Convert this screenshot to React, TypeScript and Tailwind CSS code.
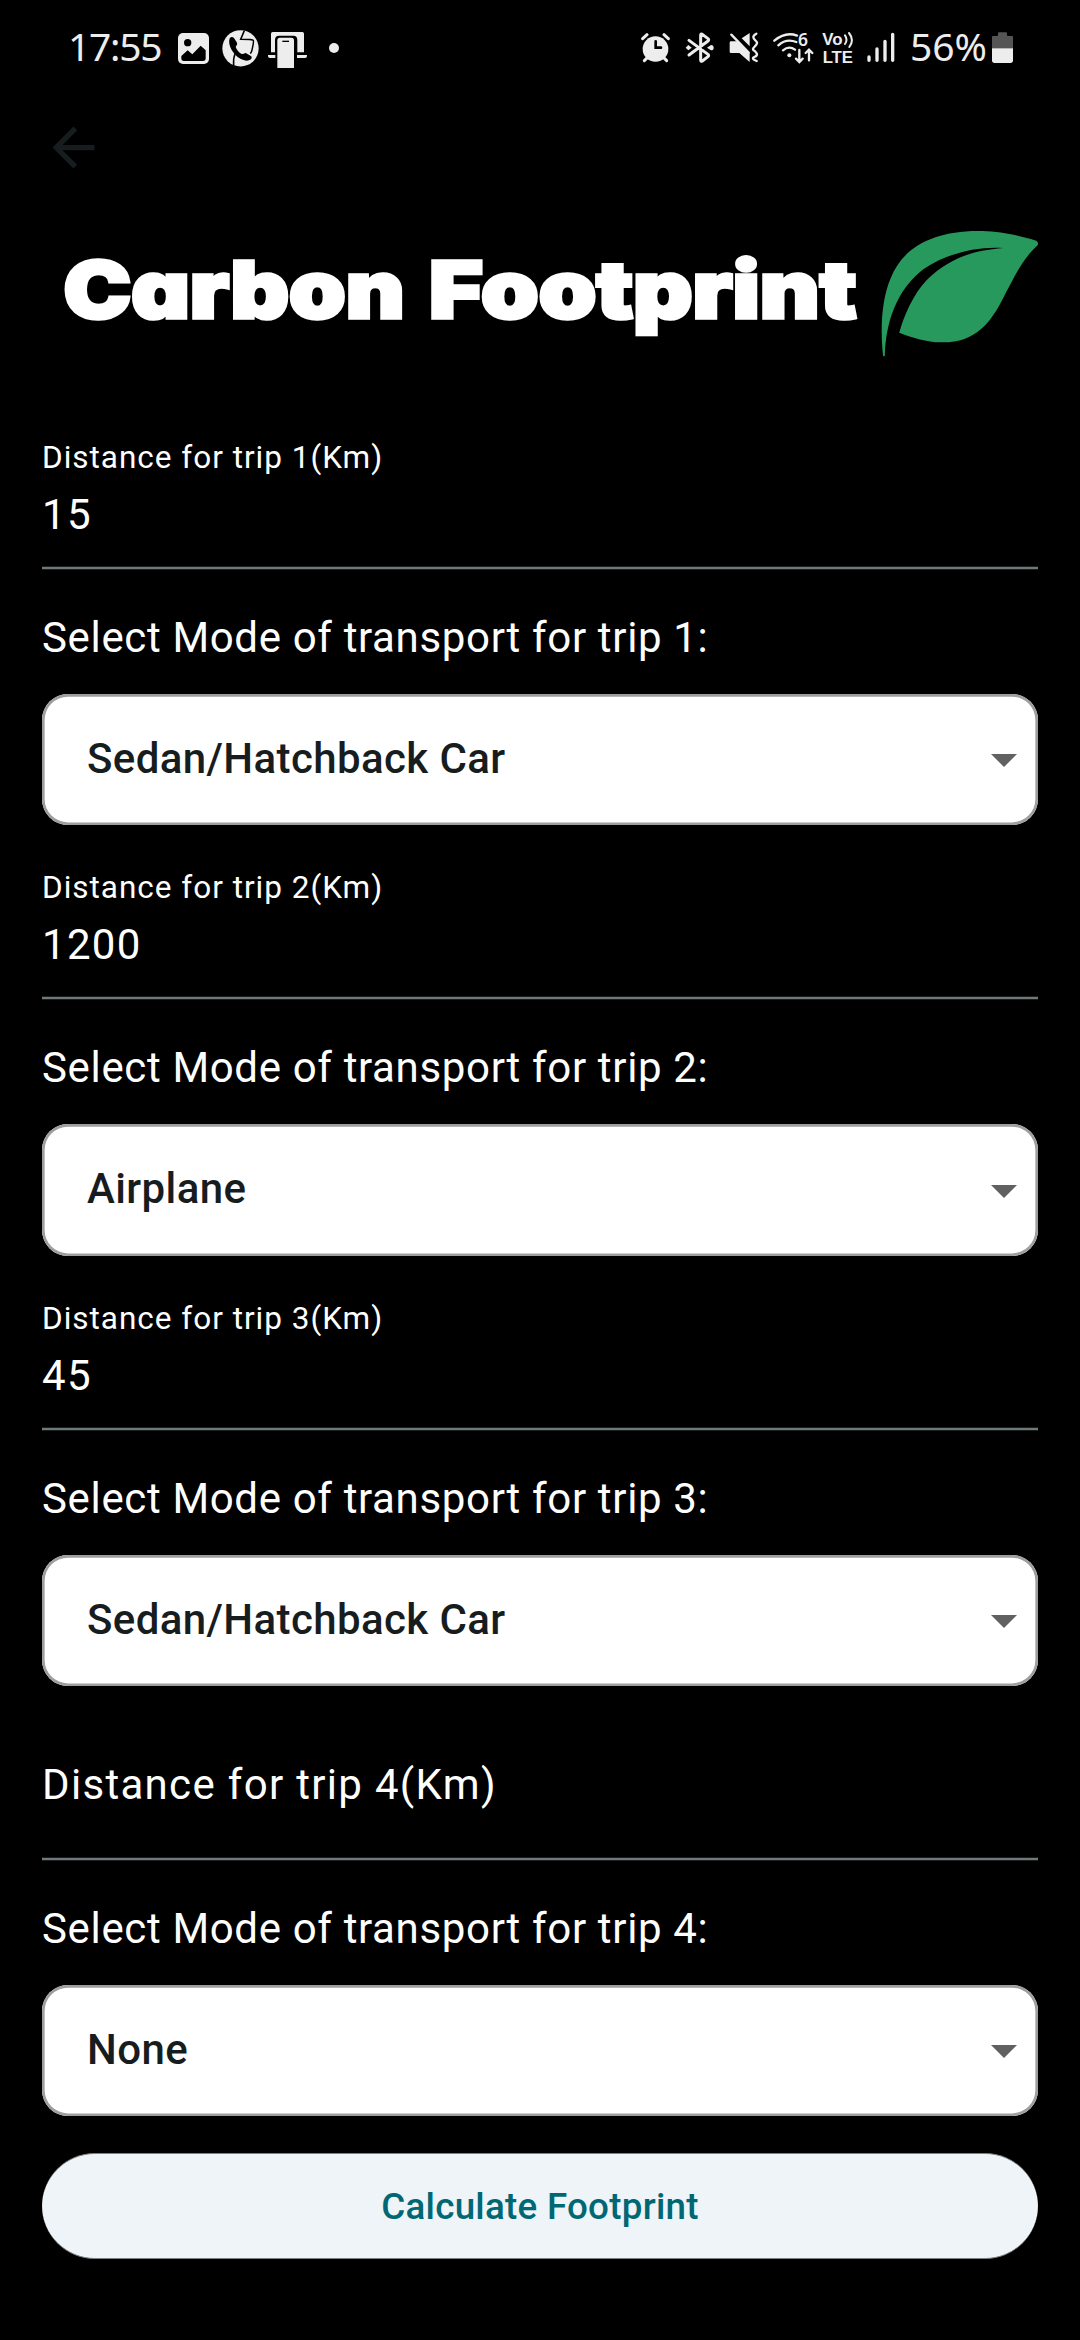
import React from "react";

const INK = "#ededed";

type IconProps = { x: number; w: number; className: string; children: React.ReactNode };

function StatusIcon({ x, w, className, children }: IconProps) {
  return (
    <svg viewBox={`${x} 57 ${w} 120`} className={`h-10 shrink-0 ${className}`} fill={INK}>
      {children}
    </svg>
  );
}

function StatusBar() {
  return (
    <header className="flex h-[98px] items-center pl-[68px] font-['Noto_Sans',sans-serif] text-[39px] leading-10 text-[#ededed]">
      <span className="-mt-[6px] w-[110px] shrink-0 tracking-[-1.3px] whitespace-nowrap">17:55</span>

      <StatusIcon x={414} w={93} className="w-[31px]">
        <rect x="414" y="69" width="93" height="93" rx="15" />
        <circle cx="443" cy="98" r="11" fill="#000" />
        <path d="M424 138l19-17 14 12 25-26 15 14v24q0 8-8 8h-57q-8 0-8-8z" fill="#000" />
      </StatusIcon>
      <StatusIcon x={546} w={111} className="ml-[13px] w-[37px]">
        <circle cx="601.500" cy="115" r="54.500" />
        <path
          d="M613 62l-11 26q36 0 38 3 2 4-5 33l-4 7M585 132q-6 14-4 34"
          fill="none"
          stroke="#000"
          strokeWidth="4.500"
        />
        <path d="M569 85q6-8 13-1l9 14q2 5-2 9l-2 4q5 14 18 21l7-1q5-4 9 0l13 8q3 5-1 9-9 6-20 3-24-7-38-31-11-20-6-35z" fill="#000" />
      </StatusIcon>
      <StatusIcon x={684} w={117} className="ml-[9px] w-[39px]">
        <path d="M698 66h89q5 0 5 5v56h-20V90q0-13-12-13h-43q-12 0-12 13v37h-12V71q0-5 5-5zM684 135h22v9h-16q-6 0-6-6zM771 135h30v3q0 6-6 6h-24z" />
        <path d="M712 174V91q0-8 8-8h34q8 0 8 8v83z" />
        <rect x="727" y="92" width="20" height="4" fill="#000" />
      </StatusIcon>
      <StatusIcon x={867} w={30} className="ml-[22px] w-[10px]">
        <circle cx="882" cy="114" r="15" />
      </StatusIcon>

      <StatusIcon x={63} w={87} className="ml-[302px] w-[29px]">
        <circle cx="106.500" cy="117" r="38.500" />
        <path d="M68 86l13-12M145 86l-13-12" stroke={INK} strokeWidth="9" strokeLinecap="round" />
        <path d="M73 152l9-9M140 152l-9-9" stroke={INK} strokeWidth="9" strokeLinecap="round" />
        <path d="M107 94v19h16" fill="none" stroke="#000" strokeWidth="8" strokeLinecap="round" />
      </StatusIcon>
      <StatusIcon x={195} w={87} className="ml-[15px] w-[29px]">
        <path
          d="M207 91l57 42q4 4 0 7l-17 13q-5 3-5-3V76q0-6 5-3l17 13q4 3 0 7l-57 42"
          fill="none"
          stroke={INK}
          strokeWidth="9"
          strokeLinecap="round"
          strokeLinejoin="round"
        />
        <path d="M197 113l8-8 10 8-10 8zM261 113l12-8q8 0 8 8t-8 8z" />
      </StatusIcon>
      <StatusIcon x={327} w={90} className="ml-[15px] w-[30px]">
        <path d="M389 69v40l-24-24zM329 98q0-4 4-4h20l36 34v28l-31-27h-25q-4 0-4-4z" />
        <path d="M334 74l52 54" stroke={INK} strokeWidth="7" strokeLinecap="round" />
        <path
          d="M409 71q-9 5-9 10t6 10 5 9-8 11-2 10 9 9-7 11 7 12"
          fill="none"
          stroke={INK}
          strokeWidth="7"
          strokeLinecap="round"
        />
      </StatusIcon>
      <StatusIcon x={459} w={123} className="ml-[14px] w-[41px]">
        <path
          d="M463 92q34-28 68-15M475 106q24-22 54-10M489 121q18-15 36-2"
          fill="none"
          stroke={INK}
          strokeWidth="7"
          strokeLinecap="round"
        />
        <circle cx="508" cy="136" r="6" />
        <path
          d="M538 120v34M528 146l10 10 10-10M567 151v-31M557 129l10-10 10 10"
          fill="none"
          stroke={INK}
          strokeWidth="7"
          strokeLinecap="round"
        />
        <text x="534" y="109" fontSize="51" fontWeight="600" textLength="30" lengthAdjust="spacingAndGlyphs">6</text>
      </StatusIcon>
      <StatusIcon x={606} w={96} className="ml-[8px] w-[32px]">
        <g fontFamily="'Liberation Sans', sans-serif" fontWeight="700">
          <text x="607" y="104" fontSize="49" textLength="61" lengthAdjust="spacingAndGlyphs">Vo</text>
          <text x="608" y="158" fontSize="51" textLength="91" lengthAdjust="spacingAndGlyphs">LTE</text>
        </g>
        <path
          d="M675 76q9 13 0 26M687 69q17 21 1 42"
          fill="none"
          stroke={INK}
          strokeWidth="6"
          strokeLinecap="round"
        />
      </StatusIcon>
      <StatusIcon x={741} w={84} className="ml-[13px] w-[28px]">
        <path d="M747 141v10M771 117v34M795 94v57M818 73v78" stroke={INK} strokeWidth="10" strokeLinecap="round" />
      </StatusIcon>
      <span className="-mt-[6px] ml-[15px] w-[82px] shrink-0 tracking-[-0.1px] whitespace-nowrap">56%</span>
      <StatusIcon x={1116} w={63} className="w-[21px]">
        <path d="M1116 80q0-2 2-2h13q3 0 3-3v-5q0-3 3-3h21q3 0 3 3v5q0 3 3 3h13q2 0 2 2v35h-63z" fill="#555" />
        <path d="M1116 115h63v36q0 8-8 8h-47q-8 0-8-8z" />
      </StatusIcon>
    </header>
  );
}

function Logo() {
  return (
    <div className="flex h-[131px] items-start pl-[60px]">
      <h1 className="w-[800px] shrink-0">
        <svg viewBox="60 231 800 131" className="h-[131px] w-[800px]" aria-label="Carbon Footprint">
          <g
            fontFamily="Inter, sans-serif"
            fontSize="79"
            fontWeight="900"
            fill="#fff"
            stroke="#fff"
            strokeWidth="3.500"
            style={{ fontFeatureSettings: '"cv11"' }}
          >
            <text x="63.500" y="318" textLength="341" lengthAdjust="spacingAndGlyphs">Carbon</text>
            <text x="429" y="318" textLength="427.500" lengthAdjust="spacingAndGlyphs">Footprint</text>
          </g>
        </svg>
      </h1>
      <svg
        viewBox="1047 60 459 381"
        preserveAspectRatio="none"
        className="-mt-px ml-[20.500px] h-[127px] w-[158px]"
        fill="#28995d"
      >
        <path d="M1053 437C1044 350 1050 265 1075 205C1110 112 1200 60 1340 63C1400 65 1440 75 1498 92Q1506 97 1502 106C1455 152 1444 183 1404 260C1365 340 1320 400 1220 397C1180 396 1140 384 1100 368C1113 318 1142 250 1180 210C1245 145 1310 122 1402 114C1330 108 1235 130 1170 178C1108 227 1062 310 1058 437Q1055 441 1053 437Z" />
      </svg>
    </div>
  );
}

type Trip = { id: number; distance?: string; mode: string };

const trips: Trip[] = [
  { id: 1, distance: "15", mode: "Sedan/Hatchback Car" },
  { id: 2, distance: "1200", mode: "Airplane" },
  { id: 3, distance: "45", mode: "Sedan/Hatchback Car" },
  { id: 4, mode: "None" },
];

function TripSection({ trip }: { trip: Trip }) {
  return (
    <section className="flex h-[430.4px] flex-col text-[42px] leading-[63px] tracking-[1.3125px]">
      <div className="flex h-[144px] flex-col">
        {trip.distance ? (
          <>
            <span className="mt-[14.8px] text-[31.5px] leading-[42px] tracking-[0.984px]">
              Distance for trip {trip.id}(Km)
            </span>
            <span className="mt-1">{trip.distance}</span>
          </>
        ) : (
          <span className="mt-[39.5px]">Distance for trip {trip.id}(Km)</span>
        )}
      </div>
      <div className="h-1 border-y border-[#1c1f1f] bg-[#6f797a]" />
      <span className="mt-9 tracking-[0.656px]">Select Mode of transport for trip {trip.id}:</span>
      <div className="mt-[25px] flex h-[131.25px] items-center justify-between rounded-[26px] bg-white pr-[21px] pl-[45px] font-medium tracking-[0.39px] text-[#171d1e] shadow-[inset_0_0_0_2.625px_#9e9e9e]">
        <span className="-mt-[2.3px]">{trip.mode}</span>
        <svg viewBox="0 0 26 13" className="mt-0.5 h-[13px] w-[26px]" fill="#616161">
          <path d="M0 0h26L13 13z" />
        </svg>
      </div>
    </section>
  );
}

export default function App() {
  return (
    <main className="flex h-[2340px] w-[1080px] flex-col overflow-hidden bg-black font-[Roboto,sans-serif] text-white">
      <StatusBar />
      <div className="mt-[18px] pl-[42px]">
        <svg viewBox="0 0 24 24" className="size-[63px]" fill="#171d1e">
          <path d="M20 11H7.830l5.590-5.590L12 4l-8 8 8 8 1.410-1.410L7.830 13H20z" />
        </svg>
      </div>
      <div className="mt-[52px]">
        <Logo />
      </div>
      <div className="mt-[60px] flex flex-col px-[42px]">
        {trips.map((trip) => (
          <TripSection key={trip.id} trip={trip} />
        ))}
        <button className="mt-[9.400px] h-[106px] rounded-full border-y border-[#7d8082] bg-[#eef4f7] pt-px text-[36.750px] font-medium tracking-[0.2625px] text-[#006874]">
          Calculate Footprint
        </button>
      </div>
    </main>
  );
}
